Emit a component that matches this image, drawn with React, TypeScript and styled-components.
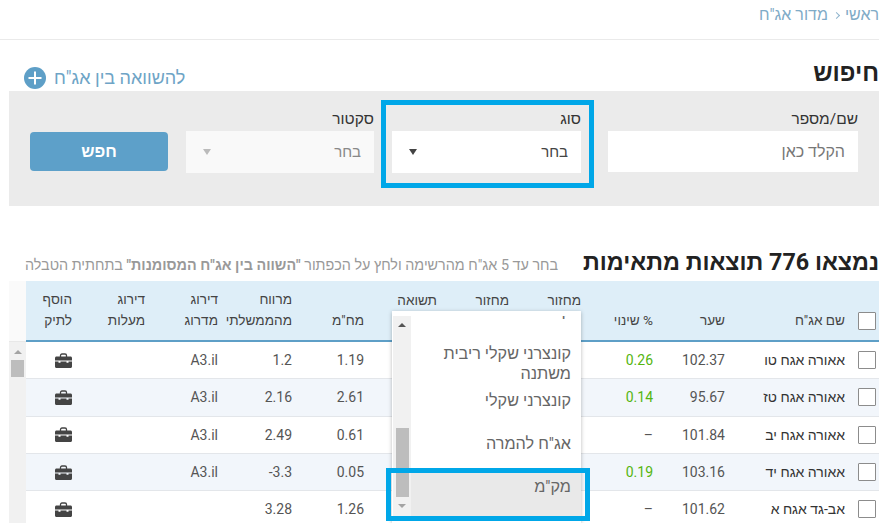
import React from "react";
import styled, { createGlobalStyle } from "styled-components";

const FONT = `Roboto, "Liberation Sans", sans-serif`;

const Global = createGlobalStyle`
  html, body { margin: 0; padding: 0; height: 523px; overflow: hidden; background: #fff; }
  body { font-family: ${FONT}; color: #333; }
  * { box-sizing: border-box; }
`;

const COLS = "26px 120px 72px 72px 72px 72px 73px 72px 74px 73px 73px 54px";

const Page = styled.div`
  position: relative;
  width: 879px;
  height: 523px;
  overflow: hidden;
  direction: rtl;
`;
const Breadcrumb = styled.nav`
  height: 40px;
  border-bottom: 1px solid #eaeaea;
  padding-top: 5px;
  font-size: 16px;
  line-height: 20px;
  color: #7fabc7;
  display: flex;
  align-items: flex-start;
  gap: 6px;
`;
const Crumb = styled.span``;
const Chevron = styled.span`
  width: 5px;
  height: 5px;
  margin-top: 8px;
  border-top: 1px solid #8fb3cc;
  border-right: 1px solid #8fb3cc;
  transform: rotate(45deg);
`;
const SearchHead = styled.div`
  height: 51px;
  margin-left: 9px;
  padding-left: 15px;
  display: flex;
  justify-content: space-between;
  align-items: flex-start;
`;
const Heading = styled.h2`
  margin: 20px 0 0;
  font-size: 24px;
  line-height: 26px;
  font-weight: 700;
  color: #222;
`;
const CompareLink = styled.a`
  margin-top: 27px;
  display: flex;
  align-items: center;
  gap: 8px;
  color: #6ea4c6;
  font-size: 18px;
  line-height: 22px;
`;
const Panel = styled.section`
  margin-left: 9px;
  height: 115px;
  background: #ebebeb;
  padding: 18px 21px 0 21px;
  display: flex;
  gap: 18px;
  align-items: flex-start;
`;
const Field = styled.div<{ $w: number; $gap?: number }>`
  width: ${(p) => p.$w}px;
  margin-left: ${(p) => p.$gap ?? 0}px;
`;
const Label = styled.label`
  display: block;
  font-size: 15.5px;
  line-height: 20px;
  height: 22px;
  color: #333;
`;
const Input = styled.div`
  height: 41px;
  background: #fff;
  color: #777;
  font-size: 16px;
  line-height: 41px;
  padding-right: 13px;
`;
const Select = styled.div<{ $disabled?: boolean }>`
  height: 42px;
  background: ${(p) => (p.$disabled ? "#f9f9f9" : "#fff")};
  color: ${(p) => (p.$disabled ? "#888" : "#444")};
  font-size: 15px;
  padding: 0 13px 0 17px;
  display: flex;
  justify-content: space-between;
  align-items: center;
`;
const Caret = styled.span<{ $disabled?: boolean }>`
  width: 0;
  height: 0;
  border-left: 4px solid transparent;
  border-right: 4px solid transparent;
  border-top: 6px solid ${(p) => (p.$disabled ? "#bbb" : "#444")};
`;
const SearchButton = styled.button`
  width: 138px;
  height: 39px;
  margin-top: 23px;
  border: 0;
  border-radius: 4px;
  background: #5da0c9;
  color: #fff;
  font: 700 16.5px ${FONT};
`;
const ResultsHead = styled.div`
  height: 75px;
  margin-left: 9px;
  padding: 43px 0 0 16px;
  display: flex;
  justify-content: space-between;
  align-items: baseline;
`;
const ResultsTitle = styled.h2`
  margin: 0;
  font-size: 23.3px;
  line-height: 26px;
  font-weight: 700;
  color: #222;
`;
const ResultsHint = styled.p`
  margin: 0;
  font-size: 14.35px;
  color: #999;
  b { font-weight: 700; }
`;
const TableWrap = styled.div`
  margin-left: 9px;
  display: flex;
`;
const Table = styled.div`
  width: 853px;
`;
const HeadRow = styled.div`
  display: grid;
  grid-template-columns: ${COLS};
  height: 61px;
  background: #deeef8;
  border-bottom: 2px solid #5e9fc7;
`;
const HeadCell = styled.div<{ $top?: boolean }>`
  font-size: 13.6px;
  line-height: 21px;
  color: #444;
  white-space: nowrap;
  padding: ${(p) => (p.$top ? "9px 8px 0 0" : "0 8px 9px 0")};
  align-self: ${(p) => (p.$top ? "start" : "end")};
`;
const Row = styled.div<{ $alt: boolean }>`
  display: grid;
  grid-template-columns: ${COLS};
  height: 37.33px;
  background: ${(p) => (p.$alt ? "#f2f6fb" : "#fff")};
  border-bottom: 1px solid #e3e6ea;
  align-items: center;
`;
const Cell = styled.div<{ $tone?: "name" | "up" }>`
  font-size: 14px;
  padding-right: 8px;
  white-space: nowrap;
  color: ${(p) => (p.$tone === "up" ? "#55b510" : p.$tone === "name" ? "#333" : "#555")};
`;
const CheckCell = styled.div<{ $head?: boolean }>`
  padding-right: 3px;
  align-self: ${(p) => (p.$head ? "end" : "center")};
  padding-bottom: ${(p) => (p.$head ? "10px" : "0")};
`;
const Check = styled.span`
  display: block;
  width: 18px;
  height: 18px;
  background: #fff;
  border: 1px solid #8c8c8c;
  border-radius: 1px;
`;
const Gutter = styled.div`
  width: 17px;
  display: flex;
  flex-direction: column;
  background: #f1f1f1;
`;
const GutterHead = styled.div`
  height: 61px;
  background: #fafafa;
  border-bottom: 1px solid #e8e8e8;
`;
const ArrowUp = styled.span`
  display: block;
  margin: 0 auto;
  width: 0;
  height: 0;
  border-left: 4px solid transparent;
  border-right: 4px solid transparent;
  border-bottom: 4px solid #a3a3a3;
`;
const ArrowDown = styled.span`
  display: block;
  margin: 0 auto;
  width: 0;
  height: 0;
  border-left: 4px solid transparent;
  border-right: 4px solid transparent;
  border-top: 4px solid #a3a3a3;
`;
const GutterArrow = styled.div`
  padding-top: 8px;
  height: 18px;
`;
const GutterThumb = styled.div`
  width: 13px;
  height: 17px;
  margin: 0 2px;
  background: #bdbdbd;
`;
const Dropdown = styled.div`
  position: absolute;
  left: 392px;
  top: 311px;
  width: 189px;
  height: 212px;
  background: #fff;
  box-shadow: 0 1px 4px rgba(0, 0, 0, 0.28);
  display: flex;
  flex-direction: row;
`;
const Options = styled.div`
  flex: 1;
  margin-top: 5px;
  height: 200px;
  overflow: hidden;
  display: flex;
  flex-direction: column;
  justify-content: flex-end;
`;
const Option = styled.div<{ $active?: boolean }>`
  flex: none;
  min-height: 43px;
  padding: 4px 10px 3px 8px;
  font-size: 16.2px;
  line-height: 20px;
  color: #666;
  background: ${(p) => (p.$active ? "#e9e9e9" : "transparent")};
`;
const DropScroll = styled.div`
  width: 18px;
  margin: 5px 0 0 1px;
  height: 200px;
  background: #f1f1f1;
  display: flex;
  flex-direction: column;
  align-items: center;
`;
const DropArrow = styled.div`
  height: 19px;
  padding-top: 7px;
`;
const DarkArrowUp = styled(ArrowUp)`
  border-bottom-color: #555;
`;
const DropThumbSpace = styled.div`
  flex: 1;
  width: 13px;
  display: flex;
  align-items: flex-end;
`;
const DropThumb = styled.div`
  width: 13px;
  height: 69px;
  background: #bdbdbd;
`;
const Callout = styled.div<{ $x: number; $y: number; $w: number; $h: number }>`
  position: absolute;
  left: ${(p) => p.$x}px;
  top: ${(p) => p.$y}px;
  width: ${(p) => p.$w}px;
  height: ${(p) => p.$h}px;
  border: 5px solid #00a7e8;
  pointer-events: none;
`;

const PlusIcon = () => (
  <svg width="22" height="22" viewBox="0 0 22 22" aria-hidden>
    <circle cx="11" cy="11" r="11" fill="#5e9fc7" />
    <path d="M11 4.500v13M4.500 11h13" stroke="#fff" strokeWidth="2" />
  </svg>
);

const Briefcase = () => (
  <svg width="17" height="15" viewBox="0 0 17 15" aria-hidden style={{ display: "block" }}>
    <path d="M5.500 4V2.600C5.500 1.600 6.200 1 7 1h3c.8 0 1.500.6 1.500 1.600V4" fill="none" stroke="#444" strokeWidth="1.300" />
    <path d="M1.500 3.500h14c.8 0 1.500.6 1.500 1.500v2.400H0V5c0-.9.7-1.500 1.500-1.500z" fill="#444" />
    <path d="M0 8.600h3.500v1.200h2V8.600h6v1.200h2V8.600H17v4.900c0 .8-.6 1.500-1.500 1.500h-14C.6 15 0 14.300 0 13.500z" fill="#444" />
  </svg>
);

const headers: { lines: string[]; top?: boolean }[] = [
  { lines: ["שם אג\"ח"] },
  { lines: ["שער"] },
  { lines: ["% שינוי"] },
  { lines: ["מחזור"], top: true },
  { lines: ["מחזור"], top: true },
  { lines: ["תשואה"], top: true },
  { lines: ["מח\"מ"] },
  { lines: ["מרווח", "מהממשלתי"] },
  { lines: ["דירוג", "מדרוג"] },
  { lines: ["דירוג", "מעלות"] },
  { lines: ["הוסף", "לתיק"] },
];

const rows = [
  { name: "אאורה אגח טו", price: "102.37", ch: "0.26", dur: "1.19", spread: "1.2", rating: "A3.il" },
  { name: "אאורה אגח טז", price: "95.67", ch: "0.14", dur: "2.61", spread: "2.16", rating: "A3.il" },
  { name: "אאורה אגח יב", price: "101.84", ch: "–", dur: "0.61", spread: "2.49", rating: "A3.il" },
  { name: "אאורה אגח יד", price: "103.16", ch: "0.19", dur: "0.05", spread: "-3.3", rating: "A3.il" },
  { name: "אב-גד אגח א", price: "101.62", ch: "–", dur: "1.26", spread: "3.28", rating: "" },
];

export default function App() {
  return (
    <Page>
      <Global />
      <Breadcrumb>
        <Crumb>ראשי</Crumb>
        <Chevron />
        <Crumb>מדור אג"ח</Crumb>
      </Breadcrumb>
      <SearchHead>
        <Heading>חיפוש</Heading>
        <CompareLink>
          להשוואה בין אג"ח
          <PlusIcon />
        </CompareLink>
      </SearchHead>
      <Panel>
        <Field $w={250} $gap={9}>
          <Label>שם/מספר</Label>
          <Input>הקלד כאן</Input>
        </Field>
        <Field $w={189}>
          <Label>סוג</Label>
          <Select>
            בחר
            <Caret />
          </Select>
        </Field>
        <Field $w={188}>
          <Label>סקטור</Label>
          <Select $disabled>
            בחר
            <Caret $disabled />
          </Select>
        </Field>
        <SearchButton>חפש</SearchButton>
      </Panel>
      <ResultsHead>
        <ResultsTitle>נמצאו 776 תוצאות מתאימות</ResultsTitle>
        <ResultsHint>
          בחר עד 5 אג"ח מהרשימה ולחץ על הכפתור <b>"השווה בין אג"ח המסומנות"</b> בתחתית הטבלה
        </ResultsHint>
      </ResultsHead>
      <TableWrap>
        <Table>
          <HeadRow>
            <CheckCell $head>
              <Check />
            </CheckCell>
            {headers.map((h, i) => (
              <HeadCell key={i} $top={h.top}>
                {h.lines.map((l) => (
                  <div key={l}>{l}</div>
                ))}
              </HeadCell>
            ))}
          </HeadRow>
          {rows.map((r, i) => (
            <Row key={r.name} $alt={i % 2 === 1}>
              <CheckCell>
                <Check />
              </CheckCell>
              <Cell $tone="name">{r.name}</Cell>
              <Cell>{r.price}</Cell>
              <Cell $tone={r.ch === "–" ? undefined : "up"}>{r.ch}</Cell>
              <Cell />
              <Cell />
              <Cell />
              <Cell>{r.dur}</Cell>
              <Cell>
                <bdi>{r.spread}</bdi>
              </Cell>
              <Cell>{r.rating}</Cell>
              <Cell />
              <Cell>
                <Briefcase />
              </Cell>
            </Row>
          ))}
        </Table>
        <Gutter>
          <GutterHead />
          <GutterArrow>
            <ArrowUp />
          </GutterArrow>
          <GutterThumb />
        </Gutter>
      </TableWrap>
      <Dropdown>
        <Options>
          <Option>קונצרני צמוד</Option>
          <Option>קונצרני שקלי ריבית משתנה</Option>
          <Option>קונצרני שקלי</Option>
          <Option>אג"ח להמרה</Option>
          <Option $active>מק"מ</Option>
        </Options>
        <DropScroll>
          <DropArrow>
            <DarkArrowUp />
          </DropArrow>
          <DropThumbSpace>
            <DropThumb />
          </DropThumbSpace>
          <DropArrow>
            <ArrowDown />
          </DropArrow>
        </DropScroll>
      </Dropdown>
      <Callout $x={381} $y={100} $w={213} $h={88} />
      <Callout $x={386} $y={468} $w={204} $h={53} />
    </Page>
  );
}
